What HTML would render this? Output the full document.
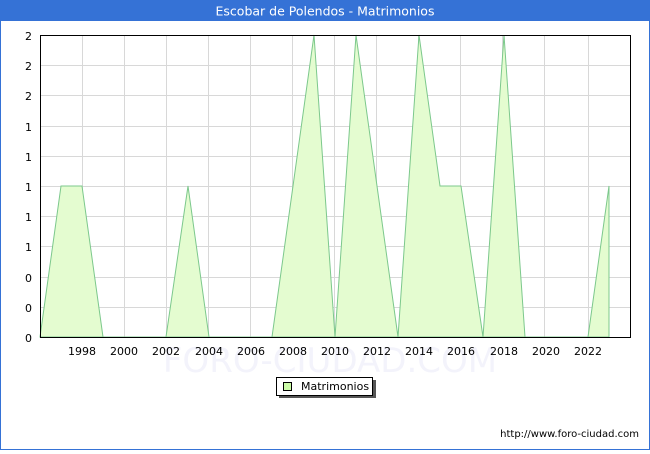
<!DOCTYPE html>
<html><head><style>
body{margin:0;width:650px;height:450px;overflow:hidden;background:#fff;font-family:"DejaVu Sans","Liberation Sans",sans-serif}
</style></head><body>
<svg width="650" height="450" xmlns="http://www.w3.org/2000/svg" font-family="DejaVu Sans, Liberation Sans, sans-serif">
<rect x="0.5" y="0.5" width="649" height="449" fill="#fff" stroke="#3572d6"/>
<rect x="0" y="0" width="650" height="21" fill="#3572d6"/>
<text x="325" y="15.5" fill="#fff" font-size="12.5" text-anchor="middle">Escobar de Polendos - Matrimonios</text>
<text x="330" y="372" fill="#f3f3fb" font-size="34" text-anchor="middle">FORO-CIUDAD.COM</text>
<g stroke="#d8d8d8" stroke-width="1">
<line x1="40" y1="65.5" x2="630" y2="65.5"/><line x1="40" y1="95.5" x2="630" y2="95.5"/><line x1="40" y1="126.5" x2="630" y2="126.5"/><line x1="40" y1="156.5" x2="630" y2="156.5"/><line x1="40" y1="186.5" x2="630" y2="186.5"/><line x1="40" y1="216.5" x2="630" y2="216.5"/><line x1="40" y1="246.5" x2="630" y2="246.5"/><line x1="40" y1="277.5" x2="630" y2="277.5"/><line x1="40" y1="307.5" x2="630" y2="307.5"/>
<line x1="82.5" y1="35" x2="82.5" y2="337"/><line x1="124.5" y1="35" x2="124.5" y2="337"/><line x1="166.5" y1="35" x2="166.5" y2="337"/><line x1="208.5" y1="35" x2="208.5" y2="337"/><line x1="250.5" y1="35" x2="250.5" y2="337"/><line x1="292.5" y1="35" x2="292.5" y2="337"/><line x1="334.5" y1="35" x2="334.5" y2="337"/><line x1="376.5" y1="35" x2="376.5" y2="337"/><line x1="418.5" y1="35" x2="418.5" y2="337"/><line x1="460.5" y1="35" x2="460.5" y2="337"/><line x1="502.5" y1="35" x2="502.5" y2="337"/><line x1="544.5" y1="35" x2="544.5" y2="337"/><line x1="588.5" y1="35" x2="588.5" y2="337"/>
</g>
<polygon fill="#e4fcd0" stroke="#7cc88c" stroke-width="1" points="40,337 61,186 82,186 103,337 166,337 188,186 209,337 272,337 293,186 314,35 335,337 356,35 377,186 398,337 419,35 440,186 461,186 483,337 504,35 525,337 588,337 609,186 609,337"/>
<rect x="40.5" y="35.5" width="590" height="302" fill="none" stroke="#000"/>
<g font-size="11" fill="#000" text-anchor="end">
<text x="32" y="40">2</text><text x="32" y="70">2</text><text x="32" y="100">2</text><text x="32" y="131">1</text><text x="32" y="161">1</text><text x="32" y="191">1</text><text x="32" y="221">1</text><text x="32" y="251">1</text><text x="32" y="282">0</text><text x="32" y="312">0</text><text x="32" y="342">0</text>
</g>
<g font-size="11" fill="#000" text-anchor="middle">
<text x="82" y="355">1998</text><text x="124" y="355">2000</text><text x="166" y="355">2002</text><text x="209" y="355">2004</text><text x="251" y="355">2006</text><text x="293" y="355">2008</text><text x="335" y="355">2010</text><text x="377" y="355">2012</text><text x="419" y="355">2014</text><text x="461" y="355">2016</text><text x="504" y="355">2018</text><text x="546" y="355">2020</text><text x="588" y="355">2022</text>
</g>
<rect x="279" y="380" width="97" height="18" fill="#555"/>
<rect x="276.5" y="377.5" width="96" height="18" fill="#fff" stroke="#000"/>
<rect x="283.5" y="382.5" width="8" height="8" fill="#ccfca8" stroke="#000"/>
<text x="301" y="390" font-size="11">Matrimonios</text>
<text x="639" y="437" font-size="10" text-anchor="end">http://www.foro-ciudad.com</text>
</svg>
</body></html>
